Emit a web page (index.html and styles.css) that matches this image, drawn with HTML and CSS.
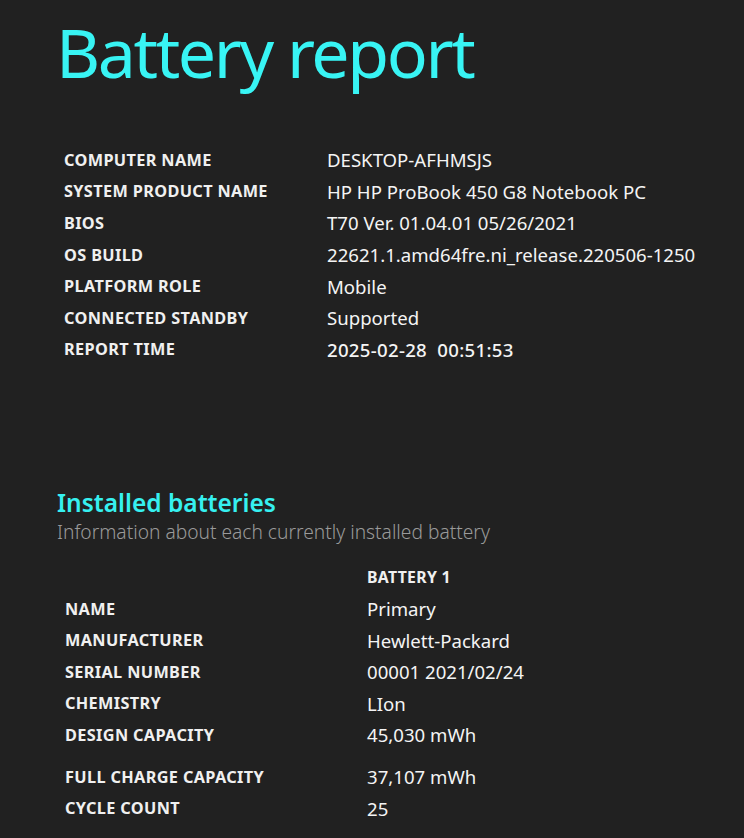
FILE: index.html
```html
<!DOCTYPE html>
<html>
<head>
<meta charset="utf-8">
<link rel="stylesheet" href="styles.css">
</head>
<body>
<main class="page">
  <h1 class="title">Battery report</h1>
  <table class="info">
    <tr><td class="label">COMPUTER NAME</td><td class="value">DESKTOP-AFHMSJS</td></tr>
    <tr><td class="label">SYSTEM PRODUCT NAME</td><td class="value">HP HP ProBook 450 G8 Notebook PC</td></tr>
    <tr><td class="label">BIOS</td><td class="value">T70 Ver. 01.04.01 05/26/2021</td></tr>
    <tr><td class="label">OS BUILD</td><td class="value">22621.1.amd64fre.ni_release.220506-1250</td></tr>
    <tr><td class="label">PLATFORM ROLE</td><td class="value">Mobile</td></tr>
    <tr><td class="label">CONNECTED STANDBY</td><td class="value">Supported</td></tr>
    <tr><td class="label">REPORT TIME</td><td class="value strong">2025-02-28&nbsp;&nbsp;00:51:53</td></tr>
  </table>

  <h2 class="section">Installed batteries</h2>
  <p class="subtitle">Information about each currently installed battery</p>

  <table class="battery">
    <tr><td class="label"></td><td class="colhead">BATTERY 1</td></tr>
    <tr><td class="label">NAME</td><td class="value">Primary</td></tr>
    <tr><td class="label">MANUFACTURER</td><td class="value">Hewlett-Packard</td></tr>
    <tr><td class="label">SERIAL NUMBER</td><td class="value">00001 2021/02/24</td></tr>
    <tr><td class="label">CHEMISTRY</td><td class="value">LIon</td></tr>
    <tr><td class="label">DESIGN CAPACITY</td><td class="value">45,030 mWh</td></tr>
    <tr class="spaced"><td class="label">FULL CHARGE CAPACITY</td><td class="value">37,107 mWh</td></tr>
    <tr><td class="label">CYCLE COUNT</td><td class="value">25</td></tr>
  </table>
</main>
</body>
</html>
```
FILE: styles.css
```css
html, body {
  margin: 0;
  padding: 0;
  background: #212121;
}
body {
  font-family: "Noto Sans", "Open Sans", sans-serif;
  color: #f2f2f2;
  width: 744px;
  height: 838px;
  overflow: hidden;
}
.page {
  padding: 0 0 0 56px;
}
.title {
  margin: 0;
  padding-top: 4px;
  font-size: 68px;
  font-weight: 400;
  line-height: 96px;
  color: #38f4f4;
  letter-spacing: -2.4px;
}
.info {
  border-collapse: collapse;
  margin: 44px 0 0 8px;
}
.info td {
  padding: 0;
  height: 31.6px;
  vertical-align: middle;
}
.label {
  font-size: 16.3px;
  font-weight: 700;
  color: #f0f0f0;
  letter-spacing: 0.35px;
  width: 263px;
  white-space: nowrap;
}
.value {
  font-size: 18.6px;
  font-weight: 400;
  color: #f4f4f4;
  white-space: nowrap;
}
.value.strong {
  font-weight: 500;
  letter-spacing: 0.3px;
}
.section {
  margin: 122px 0 0 1px;
  font-size: 24.5px;
  font-weight: 600;
  color: #36f0f0;
  line-height: 32px;
}
.subtitle {
  margin: 0 0 0 1px;
  font-size: 19.2px;
  font-weight: 300;
  color: #9a9a9a;
  line-height: 26px;
}
.battery {
  border-collapse: collapse;
  margin: 16px 0 0 9px;
}
.battery td {
  padding: 0;
  height: 31.6px;
  vertical-align: middle;
}
.battery .label {
  width: 302px;
}
.colhead {
  font-size: 15.8px;
  font-weight: 700;
  color: #f0f0f0;
  letter-spacing: 0.3px;
  height: 24px !important;
}
.battery tr.spaced td {
  padding-top: 10px;
}
```
